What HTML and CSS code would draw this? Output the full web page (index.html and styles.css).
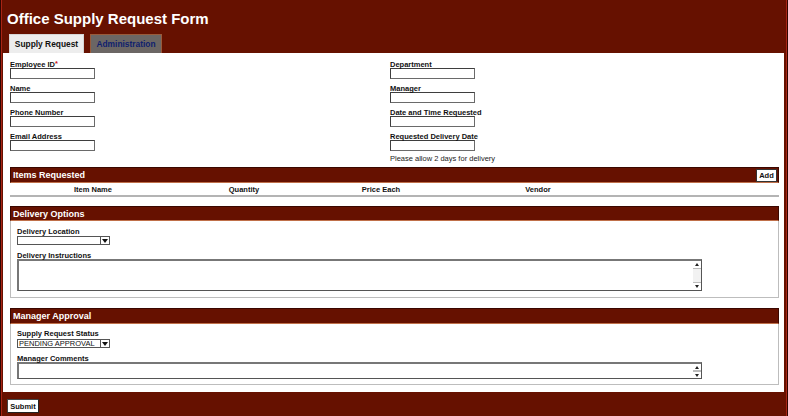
FILE: index.html
```html
<!DOCTYPE html>
<html lang="en">
<head>
<meta charset="utf-8">
<title>Office Supply Request Form</title>
<link rel="stylesheet" href="styles.css">
</head>
<body>
<div class="frame">
  <h1 class="title">Office Supply Request Form</h1>
  <div class="tabs">
    <div class="tab tab-active">Supply Request</div>
    <div class="tab tab-other">Administration</div>
  </div>
  <div class="panel">
    <div class="top">
      <div class="col">
        <div class="field"><label class="lbl">Employee ID<span class="req">*</span></label><input class="txt" type="text"></div>
        <div class="field"><label class="lbl">Name</label><input class="txt" type="text"></div>
        <div class="field"><label class="lbl">Phone Number</label><input class="txt" type="text"></div>
        <div class="field"><label class="lbl">Email Address</label><input class="txt" type="text"></div>
      </div>
      <div class="col">
        <div class="field"><label class="lbl">Department</label><input class="txt" type="text"></div>
        <div class="field"><label class="lbl">Manager</label><input class="txt" type="text"></div>
        <div class="field"><label class="lbl">Date and Time Requested</label><input class="txt" type="text"></div>
        <div class="field"><label class="lbl">Requested Delivery Date</label><input class="txt" type="text"></div>
        <div class="note">Please allow 2 days for delivery</div>
      </div>
    </div>

    <div class="items">
      <div class="sec-head"><span>Items Requested</span><button class="add" type="button">Add</button></div>
      <div class="cols">
        <div class="c">Item Name</div>
        <div class="c">Quantity</div>
        <div class="c">Price Each</div>
        <div class="c">Vendor</div>
        <div class="c"></div>
      </div>
    </div>

    <div class="section sec-delivery">
      <div class="sec-head"><span>Delivery Options</span></div>
      <div class="sec-body">
        <label class="lbl">Delivery Location</label>
        <div class="sel"><span class="sel-text"></span><span class="sel-arrow"></span></div>
        <label class="lbl lbl-gap">Delivery Instructions</label>
        <div class="area area-tall"><textarea class="area-input"></textarea><div class="scroll"><span class="sb sb-up"></span><span class="sb sb-down"></span></div></div>
      </div>
    </div>

    <div class="section sec-manager">
      <div class="sec-head"><span>Manager Approval</span></div>
      <div class="sec-body">
        <label class="lbl">Supply Request Status</label>
        <div class="sel"><span class="sel-text">PENDING APPROVAL</span><span class="sel-arrow"></span></div>
        <label class="lbl lbl-gap">Manager Comments</label>
        <div class="area area-short"><textarea class="area-input"></textarea><div class="scroll scroll-short"><span class="sb sb-up"></span><span class="sb sb-down"></span></div></div>
      </div>
    </div>
  </div>
  <div class="footer"><button class="submit" type="button">Submit</button></div>
</div>
</body>
</html>
```

FILE: styles.css
```css
html, body {
  height: 100%;
}
body {
  margin: 0;
  background: #661100;
  border-left: 1px solid #2e0600;
  border-right: 1px solid #2e0600;
  font-family: "Liberation Sans", Arial, sans-serif;
  overflow: hidden;
}
.frame {
  min-height: 100%;
  border-left: 1px solid #a82414;
  border-right: 1px solid #a82414;
  box-sizing: border-box;
}
.title {
  margin: 0;
  padding: 9px 0 0 5px;
  height: 25px;
  line-height: 20px;
  font-size: 15px;
  font-weight: bold;
  color: #ffffff;
}
.tabs {
  display: flex;
  gap: 6px;
  padding-left: 7px;
  height: 19px;
}
.tab {
  box-sizing: border-box;
  height: 19px;
  line-height: 18px;
  font-size: 8.4px;
  font-weight: bold;
  text-align: center;
}
.tab-active {
  width: 75px;
  background: #ededed;
  border: 1px solid #d6d6d6;
  border-bottom: none;
  color: #111;
}
.tab-other {
  width: 72px;
  background: #6b6664;
  border: 1px solid #9a5a3a;
  border-bottom: none;
  color: #0f1f6e;
}
.panel {
  margin: 0 2px 0 1px;
  background: #ffffff;
  padding: 5px 5px 7px 7px;
}
.top {
  display: grid;
  grid-template-columns: 380px 1fr;
}
.field {
  margin-bottom: 3px;
}
.lbl {
  display: block;
  font-size: 7.5px;
  padding-top: 3px;
  line-height: 7px;
  font-weight: bold;
  color: #111;
}
.req {
  color: #cc1111;
  position: relative;
  top: -1px;
}
.txt {
  display: block;
  box-sizing: border-box;
  width: 85px;
  height: 11px;
  margin: 0;
  padding: 0;
  border: 1px solid #6a6a6a;
  border-top-color: #3e3e3e;
  border-left-color: #3e3e3e;
  background: #fff;
}
.note {
  font-size: 7.5px;
  line-height: 10px;
  color: #222;
}
.items {
  margin-top: 3px;
}
.sec-head {
  display: flex;
  align-items: center;
  justify-content: space-between;
  box-sizing: border-box;
  height: 16px;
  background: #661100;
  border: 1px solid #3a0700;
  border-bottom: 1px solid #c0704a;
  color: #fff;
  font-size: 9px;
  font-weight: bold;
  padding: 0 1px 0 2px;
}
.add {
  box-sizing: border-box;
  height: 13px;
  width: 21px;
  padding: 0;
  margin: 0;
  border: 1px solid #333;
  background: #fff;
  font-family: inherit;
  font-size: 7.5px;
  font-weight: bold;
  color: #111;
}
.cols {
  display: grid;
  grid-template-columns: 166px 136px 138px 176px 1fr;
  height: 12px;
  line-height: 14px;
  border-bottom: 2px solid #b4b4b4;
  font-size: 7.5px;
  font-weight: bold;
  color: #111;
}
.c {
  text-align: center;
}
.section {
  border: 1px solid #bdbdbd;
  border-top: none;
}
.section .sec-head {
  margin: 0 -1px;
}
.sec-delivery {
  margin-top: 9px;
}
.sec-delivery .sec-head {
  height: 15px;
}
.sec-manager {
  margin-top: 10px;
}
.sec-body {
  padding: 4px 0 6px 6px;
}
.sec-manager .sec-body {
  padding-top: 3px;
  padding-bottom: 5px;
}
.lbl-gap {
  margin-top: 4px;
}
.sel {
  display: flex;
  box-sizing: border-box;
  width: 93px;
  height: 9px;
  margin-top: 1px;
  border: 1px solid #555;
  background: #fff;
}
.sec-manager .sel {
  margin-top: 2px;
}
.sel-text {
  flex: 1;
  font-size: 7.5px;
  line-height: 7px;
  padding-left: 1px;
  color: #111;
  overflow: hidden;
  white-space: nowrap;
}
.sel-arrow {
  position: relative;
  width: 8px;
  border-left: 1px solid #555;
  background: #fff;
}
.sel-arrow::after {
  content: "";
  position: absolute;
  left: 1px;
  top: 2px;
  border-left: 3px solid transparent;
  border-right: 3px solid transparent;
  border-top: 4px solid #111;
}
.area {
  display: flex;
  box-sizing: border-box;
  width: 685px;
  border: 1px solid #555;
  border-top: 2px solid #777;
  border-left: 2px solid #777;
  background: #fff;
}
.area-tall {
  height: 32px;
}
.area-short {
  height: 17px;
}
.area-input {
  flex: 1;
  border: none;
  margin: 0;
  padding: 0;
  resize: none;
  outline: none;
  background: #fff;
}
.scroll {
  display: flex;
  flex-direction: column;
  justify-content: space-between;
  width: 8px;
  background: #f2f2f2;
}
.sb {
  position: relative;
  display: block;
  height: 7px;
  background: #fff;
  border-bottom: 1px solid #bbb;
}
.sb-down {
  border-bottom: none;
  border-top: 1px solid #bbb;
}
.sb::after {
  content: "";
  position: absolute;
  left: 2px;
  top: 2px;
  border-left: 2px solid transparent;
  border-right: 2px solid transparent;
}
.sb-up::after {
  border-bottom: 3px solid #222;
}
.sb-down::after {
  border-top: 3px solid #222;
}
.scroll-short .sb {
  height: 6px;
}
.footer {
  display: flex;
  padding: 7px 0 0 5px;
}
.submit {
  box-sizing: border-box;
  width: 32px;
  height: 14px;
  padding: 0;
  margin: 0;
  border: 1px solid #444;
  border-right-color: #222;
  border-bottom-color: #222;
  background: #fff;
  font-family: inherit;
  font-size: 7.5px;
  font-weight: bold;
  color: #111;
}
```
